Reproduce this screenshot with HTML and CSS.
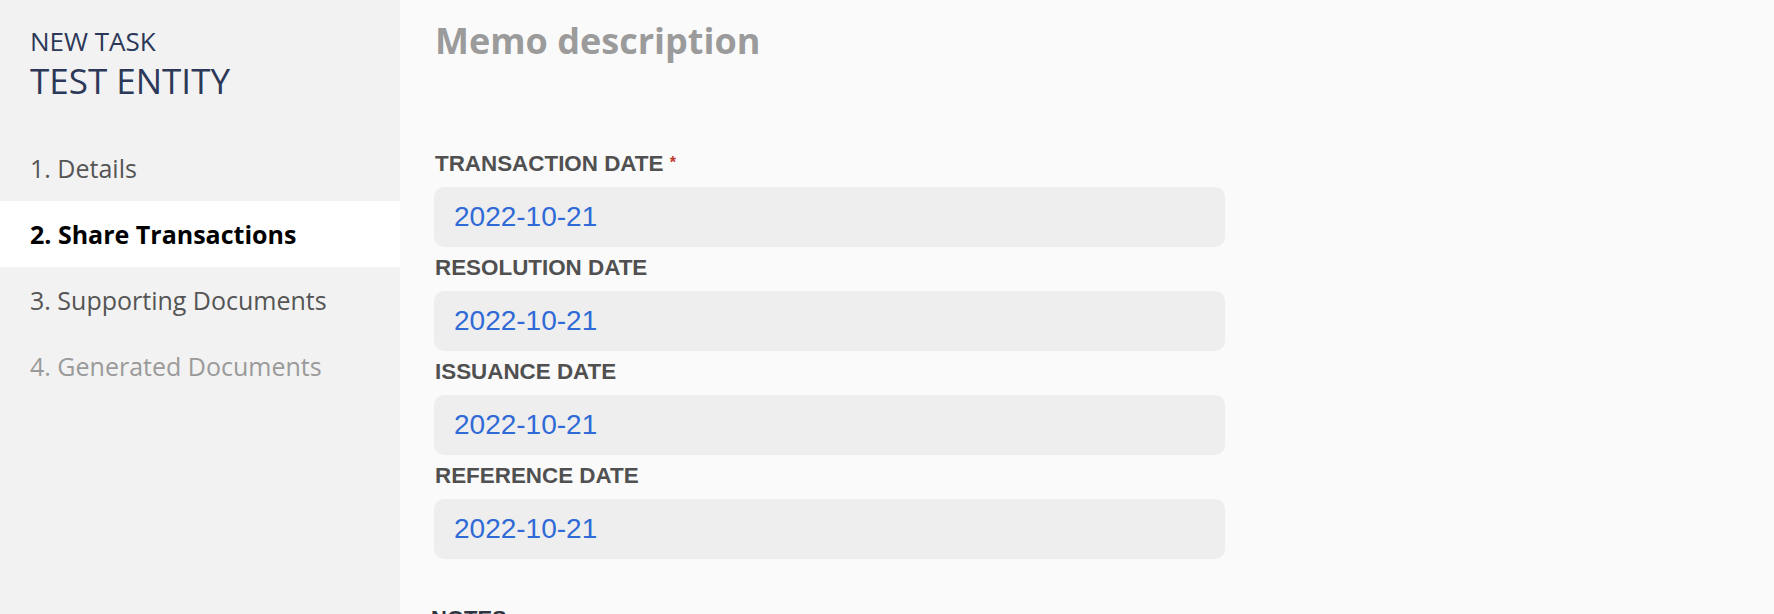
FILE: index.html
```html
<!DOCTYPE html>
<html lang="en">
<head>
<meta charset="utf-8">
<title>New Task</title>
<link rel="stylesheet" href="styles.css">
</head>
<body>
<div class="layout">
  <aside class="sidebar">
    <div class="task-head">
      <div class="task-kind">NEW TASK</div>
      <div class="task-entity">TEST ENTITY</div>
    </div>
    <nav class="steps">
      <div class="step">1. Details</div>
      <div class="step active">2. Share Transactions</div>
      <div class="step">3. Supporting Documents</div>
      <div class="step disabled">4. Generated Documents</div>
    </nav>
  </aside>
  <main class="content">
    <h1 class="title">Memo description</h1>
    <div class="field">
      <label class="label">TRANSACTION DATE <span class="req">*</span></label>
      <div class="input">2022-10-21</div>
    </div>
    <div class="field">
      <label class="label">RESOLUTION DATE</label>
      <div class="input">2022-10-21</div>
    </div>
    <div class="field">
      <label class="label">ISSUANCE DATE</label>
      <div class="input">2022-10-21</div>
    </div>
    <div class="field">
      <label class="label">REFERENCE DATE</label>
      <div class="input">2022-10-21</div>
    </div>
    <div class="notes-label">NOTES</div>
  </main>
</div>
</body>
</html>
```
FILE: styles.css
```css
html, body {
  margin: 0;
  padding: 0;
  height: 100%;
  overflow: hidden;
}
body {
  background: #fafafa;
  font-family: "Open Sans", "Liberation Sans", sans-serif;
}
.layout {
  display: flex;
  height: 100vh;
}
.sidebar {
  width: 400px;
  flex: 0 0 400px;
  background: #f2f2f2;
}
.task-head {
  padding: 24px 0 0 30px;
  color: #2c3857;
}
.task-kind {
  font-size: 26px;
  line-height: 34px;
}
.task-entity {
  font-size: 35px;
  line-height: 46px;
}
.steps {
  margin-top: 31px;
  display: flex;
  flex-direction: column;
}
.step {
  height: 66px;
  line-height: 66px;
  padding-left: 30px;
  font-size: 25px;
  color: #555555;
}
.step.active {
  background: #ffffff;
  color: #000000;
  font-weight: 700;
}
.step.disabled {
  color: #9a9a9a;
}
.content {
  flex: 1;
  padding-left: 34px;
}
.title {
  margin: 18px 0 86px 1px;
  font-family: "Open Sans", sans-serif;
  font-size: 36px;
  font-weight: 700;
  line-height: 46px;
  color: #9b9b9b;
}
.field {
  width: 791px;
}
.label {
  display: block;
  margin: 8px 0 11px 1px;
  font-family: "Liberation Sans", Arial, sans-serif;
  font-weight: 700;
  font-size: 22.4px;
  line-height: 25px;
  color: #505050;
}
.req {
  color: #c0392b;
  font-size: 16px;
  vertical-align: 3px;
}
.input {
  height: 60px;
  line-height: 60px;
  padding-left: 20px;
  border-radius: 10px;
  background: #eeeeee;
  font-family: "Liberation Sans", Arial, sans-serif;
  font-size: 28px;
  color: #2f6ad6;
}
.notes-label {
  margin: 47px 0 0 -3px;
  font-family: "Liberation Sans", Arial, sans-serif;
  font-weight: 700;
  font-size: 22px;
  line-height: 25px;
  color: #2f3440;
}
```
